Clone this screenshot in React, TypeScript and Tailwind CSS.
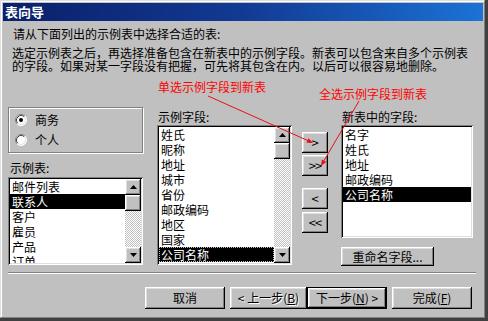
import React from 'react';

const raised =
  'shadow-[inset_-1px_-1px_0_#000,inset_1px_1px_0_#fff,inset_-2px_-2px_0_#808080,inset_2px_2px_0_#dfdfdf]';
const sunken =
  'shadow-[inset_1px_1px_0_#808080,inset_-1px_-1px_0_#fff,inset_2px_2px_0_#000,inset_-2px_-2px_0_#dfdfdf]';

function Arrow({ down }: { down?: boolean }) {
  return (
    <svg width="7" height="4" viewBox="0 0 7 4">
      <polygon points={down ? '0,0 7,0 3.5,4' : '3.5,0 7,4 0,4'} fill="#000" />
    </svg>
  );
}

function ScrollBar() {
  return (
    <div className="w-[16px] shrink-0 flex flex-col">
      <div className={`h-[16px] bg-[#c0c0c0] flex items-center justify-center ${raised}`}>
        <Arrow />
      </div>
      <div className={`h-[16px] bg-[#c0c0c0] ${raised}`} />
      <div className="flex-1 bg-[repeating-conic-gradient(#fff_0_25%,#c0c0c0_0_50%)] bg-[length:2px_2px]" />
      <div className={`h-[16px] bg-[#c0c0c0] flex items-center justify-center ${raised}`}>
        <Arrow down />
      </div>
    </div>
  );
}

function ListBox({
  items,
  selected,
  focus,
  scroll,
  className,
}: {
  items: string[];
  selected: number;
  focus?: boolean;
  scroll?: boolean;
  className: string;
}) {
  return (
    <div className={`bg-white p-[2px] flex ${sunken} ${className}`}>
      <div className="flex-1 overflow-hidden">
        {items.map((item, i) => (
          <div
            key={item}
            className={`h-[15px] leading-[15px] text-[12px] pl-[2px] whitespace-nowrap ${
              i === selected ? 'bg-black text-white' : 'text-black'
            } ${i === selected && focus ? 'outline-1 outline-dotted -outline-offset-1 outline-[#c0c0c0]' : ''}`}
          >
            {item}
          </div>
        ))}
      </div>
      {scroll && <ScrollBar />}
    </div>
  );
}

function Radio({ checked }: { checked?: boolean }) {
  return (
    <svg width="12" height="12" viewBox="0 0 12 12">
      <circle cx="6" cy="6" r="5.5" fill="#fff" />
      <path d="M2.11 9.89 A5.5 5.5 0 0 1 9.89 2.11" stroke="#808080" fill="none" />
      <path d="M9.89 2.11 A5.5 5.5 0 0 1 2.11 9.89" stroke="#fff" fill="none" />
      <path d="M2.82 9.18 A4.5 4.5 0 0 1 9.18 2.82" stroke="#404040" fill="none" />
      <path d="M9.18 2.82 A4.5 4.5 0 0 1 2.82 9.18" stroke="#dfdfdf" fill="none" />
      {checked && <circle cx="6" cy="6" r="2" fill="#000" />}
    </svg>
  );
}

function Btn({ children, className }: { children: React.ReactNode; className: string }) {
  return (
    <div
      className={`bg-[#c0c0c0] flex items-center justify-center text-[12px] text-black whitespace-nowrap ${raised} ${className}`}
    >
      {children}
    </div>
  );
}

export default function App() {
  return (
    <div className="relative w-[488px] h-[321px] bg-[#404040] font-['Noto_Sans_CJK_SC','Noto_Sans',sans-serif] overflow-hidden">
      <div className="w-[485px] h-[318px] border border-t-[#dfdfdf] border-l-[#dfdfdf] border-r-[#808080] border-b-[#808080] flex">
        <div className="flex-1 border-t border-l border-white p-[1px] bg-[#c0c0c0] flex flex-col">
          {/* title bar */}
          <div className="h-[18px] shrink-0 bg-gradient-to-r from-[#0a1f6a] via-[#123a94] to-[#1c72d6] flex items-center pl-[2px]">
            <span className="text-white font-bold text-[13px] leading-[18px]">表向导</span>
          </div>

          <p className="mt-[6px] ml-[10px] text-[12px] leading-[14px] text-black">
            请从下面列出的示例表中选择合适的表:
          </p>
          <p className="mt-[5px] ml-[9px] text-[12px] leading-[13px] text-black whitespace-nowrap">
            选定示例表之后，再选择准备包含在新表中的示例字段。新表可以包含来自多个示例表
            <br />
            的字段。如果对某一字段没有把握，可先将其包含在内。以后可以很容易地删除。
          </p>

          {/* main row */}
          <div className="mt-[35px] ml-[5px] flex items-start">
            <div className="w-[135px] flex flex-col">
              <div className="h-[46px] border border-[#808080] shadow-[inset_1px_1px_0_#fff,1px_1px_0_#fff] pt-[5px] pl-[6px] flex flex-col gap-[6px]">
                <div className="h-[14px] flex items-center gap-[8px] text-[12px] text-black">
                  <Radio checked />
                  <span>商务</span>
                </div>
                <div className="h-[14px] flex items-center gap-[8px] text-[12px] text-black">
                  <Radio />
                  <span>个人</span>
                </div>
              </div>
              <div className="mt-[8px] ml-[2px] h-[14px] leading-[14px] text-[12px] text-black">示例表:</div>
              <ListBox
                className="mt-[2px] h-[88px]"
                items={['邮件列表', '联系人', '客户', '雇员', '产品', '订单']}
                selected={1}
                scroll
              />
            </div>

            <div className="ml-[14px] w-[135px] flex flex-col">
              <div className="mt-[3px] ml-[1px] h-[14px] leading-[14px] text-[12px] text-black">示例字段:</div>
              <ListBox
                className="mt-[1px] h-[140px]"
                items={['姓氏', '昵称', '地址', '城市', '省份', '邮政编码', '地区', '国家', '公司名称']}
                selected={8}
                focus
                scroll
              />
            </div>

            <div className="ml-[10px] w-[26px] flex flex-col">
              <Btn className="mt-[25px] h-[21px] text-[13px]">&gt;</Btn>
              <Btn className="mt-[2px] h-[21px] text-[13px] tracking-[-1px]">&gt;&gt;</Btn>
              <Btn className="mt-[12px] h-[21px] text-[13px]">&lt;</Btn>
              <Btn className="mt-[3px] h-[21px] text-[13px] tracking-[-1px]">&lt;&lt;</Btn>
            </div>

            <div className="ml-[13px] w-[132px] flex flex-col">
              <div className="mt-[3px] ml-[1px] h-[14px] leading-[14px] text-[12px] text-black">新表中的字段:</div>
              <ListBox
                className="mt-[1px] h-[113px]"
                items={['名字', '姓氏', '地址', '邮政编码', '公司名称']}
                selected={4}
              />
              <Btn className="mt-[9px] h-[19px] w-[93px]">重命名字段...</Btn>
            </div>
          </div>

          {/* separator */}
          <div className="mt-[6px] ml-[5px] w-[468px] h-[2px] border-t border-[#808080] border-b border-b-white" />

          {/* bottom buttons */}
          <div className="mt-[13px] ml-[142px] flex">
            <Btn className="w-[80px] h-[22px]">取消</Btn>
            <Btn className="ml-[5px] w-[77px] h-[22px] text-[#808080] [text-shadow:1px_1px_0_#fff]">
              &lt; 上一步(<span className="underline">B</span>)
            </Btn>
            <div className="w-[80px] h-[22px] border border-black">
              <Btn className="w-full h-full">
                下一步(<span className="underline">N</span>) &gt;
              </Btn>
            </div>
            <Btn className="ml-[5px] w-[80px] h-[22px]">
              完成(<span className="underline">F</span>)
            </Btn>
          </div>
        </div>
      </div>

      {/* annotations */}
      <div className="absolute left-[158px] top-[80px] text-[12px] leading-[14px] text-[#ff0000] whitespace-nowrap">
        单选示例字段到新表
      </div>
      <div className="absolute left-[319px] top-[87px] text-[12px] leading-[14px] text-[#ff0000] whitespace-nowrap">
        全选示例字段到新表
      </div>
      <svg className="absolute left-0 top-0 pointer-events-none" width="488" height="321" viewBox="0 0 488 321">
        <line x1="208" y1="96" x2="311" y2="142" stroke="#e8101a" strokeWidth="1" />
        <polygon points="313,143 306.5,142.8 308.5,138.2" fill="#e8101a" />
        <line x1="359" y1="101" x2="322" y2="164" stroke="#e8101a" strokeWidth="1" />
        <polygon points="321,166 326.2,162.1 321.9,159.6" fill="#e8101a" />
      </svg>
    </div>
  );
}
